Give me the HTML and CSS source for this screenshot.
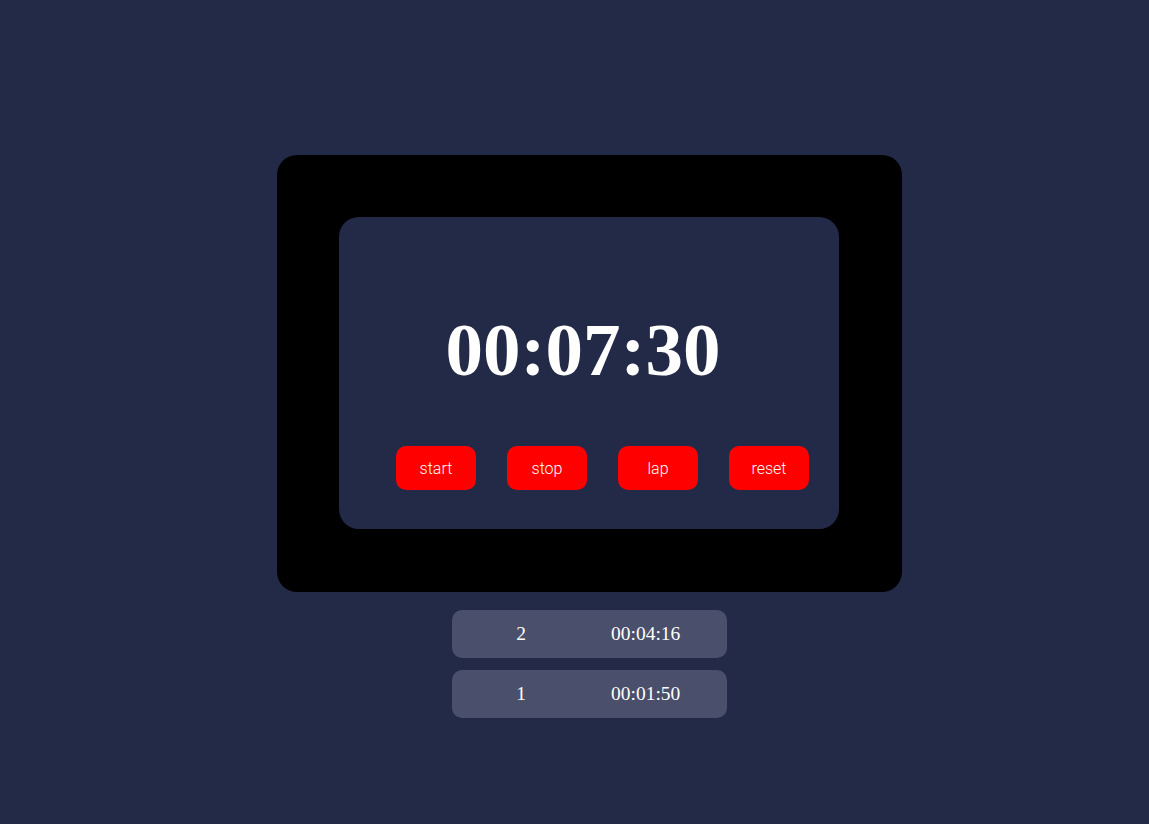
FILE: index.html
```html
<!DOCTYPE html>
<html>
<head>
<meta charset="utf-8">
<link rel="stylesheet" href="styles.css">
</head>
<body>
<main class="page">
  <section class="frame">
    <div class="panel">
      <div class="time">00:07:30</div>
      <div class="buttons">
        <button class="btn">start</button>
        <button class="btn">stop</button>
        <button class="btn">lap</button>
        <button class="btn">reset</button>
      </div>
    </div>
  </section>
  <ul class="laps">
    <li class="lap"><span class="lap-num">2</span><span class="lap-time">00:04:16</span></li>
    <li class="lap"><span class="lap-num">1</span><span class="lap-time">00:01:50</span></li>
  </ul>
</main>
</body>
</html>
```

FILE: styles.css
```css
html, body {
  margin: 0;
  padding: 0;
  background: #232a48;
  height: 100%;
}
body {
  font-family: "Liberation Serif", "Times New Roman", serif;
  color: #fff;
}
.page {
  display: flex;
  flex-direction: column;
  align-items: center;
  padding-top: 155px;
  padding-left: 30px;
}
.frame {
  width: 500px;
  height: 312px;
  padding: 62px 63px 63px 62px;
  background: #000;
  border-radius: 20px;
}
.panel {
  width: 500px;
  height: 312px;
  box-sizing: border-box;
  background: #232a48;
  border-radius: 20px;
  padding-top: 91px;
  display: flex;
  flex-direction: column;
  align-items: center;
}
.time {
  font-size: 75px;
  font-weight: bold;
  line-height: 84px;
  height: 84px;
  padding-right: 12px;
}
.buttons {
  margin-top: 54px;
  display: flex;
  gap: 31px;
  padding-left: 27px;
}
.btn {
  width: 80px;
  height: 44px;
  border: none;
  border-radius: 10px;
  background: #ff0000;
  color: #fff;
  font-family: "Roboto", "Liberation Sans", Arial, sans-serif;
  font-weight: 300;
  font-size: 16px;
  padding: 0;
  display: flex;
  align-items: center;
  justify-content: center;
}
.laps {
  list-style: none;
  margin: 18px 0 0 0;
  padding: 0;
  display: flex;
  flex-direction: column;
  gap: 12px;
}
.lap {
  width: 275px;
  height: 48px;
  background: #4a4f6b;
  border-radius: 10px;
  display: grid;
  grid-template-columns: 138px 1fr;
  align-items: center;
  font-size: 19.5px;
}
.lap-num {
  text-align: center;
}
.lap-time {
  padding-left: 21px;
}
```
